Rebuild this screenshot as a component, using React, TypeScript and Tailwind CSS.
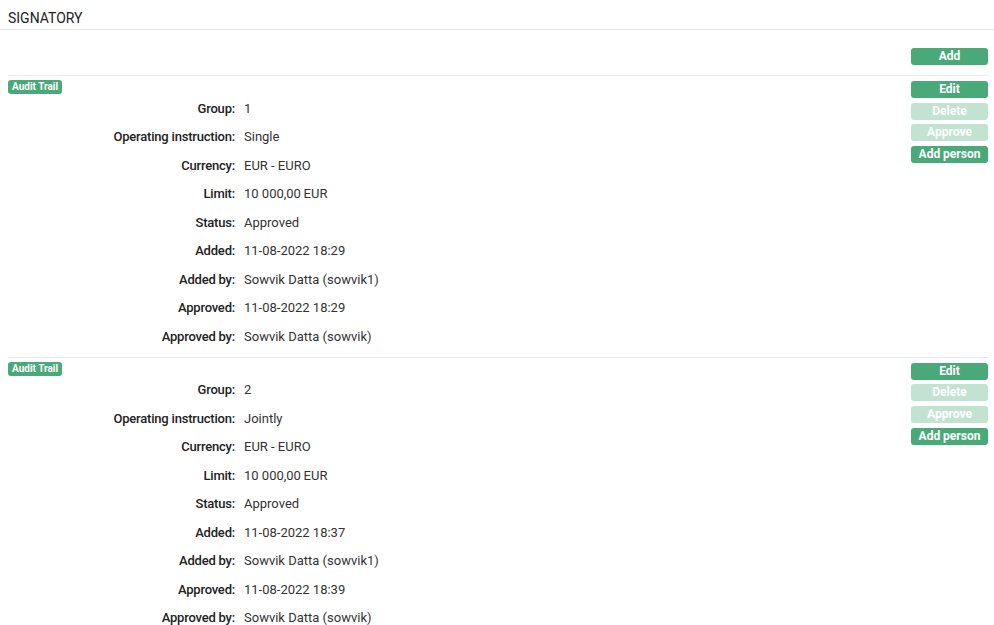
const groups = [
  {
    rows: [
      ['Group', '1'],
      ['Operating instruction', 'Single'],
      ['Currency', 'EUR - EURO'],
      ['Limit', '10 000,00\u2009EUR'],
      ['Status', 'Approved'],
      ['Added', '11-08-2022 18:29'],
      ['Added by', 'Sowvik Datta (sowvik1)'],
      ['Approved', '11-08-2022 18:29'],
      ['Approved by', 'Sowvik Datta (sowvik)'],
    ],
  },
  {
    rows: [
      ['Group', '2'],
      ['Operating instruction', 'Jointly'],
      ['Currency', 'EUR - EURO'],
      ['Limit', '10 000,00\u2009EUR'],
      ['Status', 'Approved'],
      ['Added', '11-08-2022 18:37'],
      ['Added by', 'Sowvik Datta (sowvik1)'],
      ['Approved', '11-08-2022 18:39'],
      ['Approved by', 'Sowvik Datta (sowvik)'],
    ],
  },
];

function Btn({ label, disabled }: { label: string; disabled?: boolean }) {
  return (
    <button
      className={
        disabled
          ? 'h-[17px] w-[77px] rounded-[3px] bg-[#c3e3d2] text-[12px] font-bold leading-[17px] text-white'
          : 'h-[17px] w-[77px] rounded-[3px] bg-[#4aa978] text-[12px] font-bold leading-[17px] text-white'
      }
    >
      {label}
    </button>
  );
}

export default function App() {
  return (
    <div className="min-h-screen bg-white font-['Roboto',sans-serif] text-[13px]">
      <div className="h-[30px] border-b border-[#e4e4e4] pl-2 pt-[9px] text-[14px] leading-[18px] text-[#222]">
        SIGNATORY
      </div>

      <div className="ml-2 mr-[6px] flex justify-end border-b border-[#ebebeb] pb-[10px] pt-[18px]">
        <Btn label="Add" />
      </div>

      {groups.map((g, i) => (
        <div key={i} className="ml-2 mr-[6px] flex border-b border-[#ebebeb] pt-[4px]">
          <div className="flex-1">
            <div className="h-[14px] w-fit rounded-[3px] bg-[#4aa978] px-[4px] text-[10px] font-bold leading-[14px] text-white">
              Audit Trail
            </div>
            <div className="pb-[6px]">
              {g.rows.map(([label, value]) => (
                <div key={label} className="flex h-[28.5px] items-center">
                  <div className="w-[227px] text-right font-medium tracking-[-0.2px] text-[#222]">{label}:</div>
                  <div className="pl-[9px] text-[#333]">{value}</div>
                </div>
              ))}
            </div>
          </div>
          <div className="flex w-[77px] flex-col gap-[4.7px] pt-[1px]">
            <Btn label="Edit" />
            <Btn label="Delete" disabled />
            <Btn label="Approve" disabled />
            <Btn label="Add person" />
          </div>
        </div>
      ))}
    </div>
  );
}
